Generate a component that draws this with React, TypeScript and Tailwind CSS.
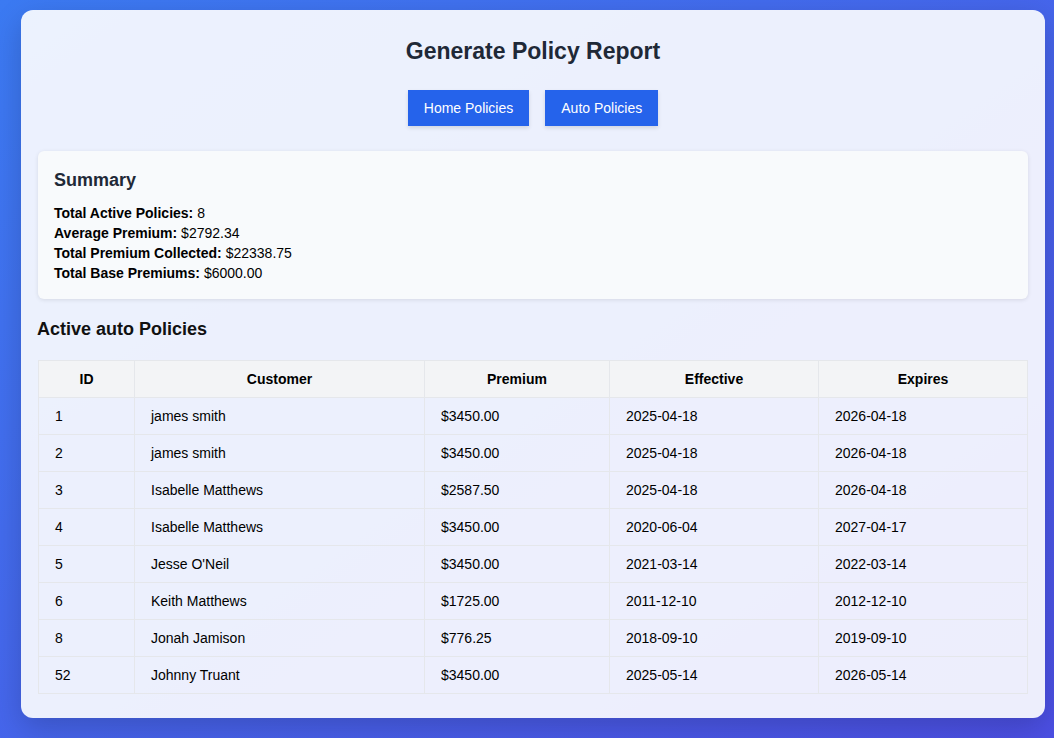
import React from "react";

const rows = [
  ["1", "james smith", "$3450.00", "2025-04-18", "2026-04-18"],
  ["2", "james smith", "$3450.00", "2025-04-18", "2026-04-18"],
  ["3", "Isabelle Matthews", "$2587.50", "2025-04-18", "2026-04-18"],
  ["4", "Isabelle Matthews", "$3450.00", "2020-06-04", "2027-04-17"],
  ["5", "Jesse O'Neil", "$3450.00", "2021-03-14", "2022-03-14"],
  ["6", "Keith Matthews", "$1725.00", "2011-12-10", "2012-12-10"],
  ["8", "Jonah Jamison", "$776.25", "2018-09-10", "2019-09-10"],
  ["52", "Johnny Truant", "$3450.00", "2025-05-14", "2026-05-14"],
];

export default function App() {
  return (
    <div
      className="min-h-[738px] w-full bg-gradient-to-br from-[#3b7af2] to-[#4c4fe4] pt-[10px] pl-[21px] pr-[9px] pb-[21px]"
      style={{ fontFamily: '"Liberation Sans", Arial, sans-serif' }}
    >
      <div className="w-[1024px] rounded-xl bg-white/90 px-4 pt-4 pb-6 shadow-[0_10px_30px_rgba(0,0,0,0.18)]">
        <h1 className="mt-[9px] text-center text-[23px] leading-8 font-bold text-[#1f2937]">
          Generate Policy Report
        </h1>
        <div className="mt-[23px] flex justify-center gap-4">
          <button className="h-9 bg-[#2563eb] px-4 text-[14px] text-white shadow-[0_2px_4px_rgba(0,0,0,0.12)]">
            Home Policies
          </button>
          <button className="h-9 bg-[#2563eb] px-4 text-[14px] text-white shadow-[0_2px_4px_rgba(0,0,0,0.12)]">
            Auto Policies
          </button>
        </div>
        <div className="mx-px mt-[25px] rounded-md bg-[#f8fafc] px-4 pt-[17px] pb-[16px] shadow-[0_1px_4px_rgba(0,0,0,0.1)]">
          <h2 className="text-[18px] leading-6 font-bold text-[#1f2937]">Summary</h2>
          <div className="mt-[11px] text-[14px] leading-5 text-black">
            <p><span className="font-bold">Total Active Policies:</span> 8</p>
            <p><span className="font-bold">Average Premium:</span> $2792.34</p>
            <p><span className="font-bold">Total Premium Collected:</span> $22338.75</p>
            <p><span className="font-bold">Total Base Premiums:</span> $6000.00</p>
          </div>
        </div>
        <h2 className="mt-[18px] text-[18px] leading-6 font-bold text-[#111]">Active auto Policies</h2>
        <div className="mx-px mt-[19px]">
          <table className="w-full border-collapse text-[14px] leading-5 text-black">
            <thead>
              <tr className="bg-[#f3f4f6]">
                <th className="w-[96px] border border-[#e5e7eb] py-2 font-bold">ID</th>
                <th className="w-[290px] border border-[#e5e7eb] py-2 font-bold">Customer</th>
                <th className="w-[185px] border border-[#e5e7eb] py-2 font-bold">Premium</th>
                <th className="w-[209px] border border-[#e5e7eb] py-2 font-bold">Effective</th>
                <th className="border border-[#e5e7eb] py-2 font-bold">Expires</th>
              </tr>
            </thead>
            <tbody>
              {rows.map((r, i) => (
                <tr key={i}>
                  {r.map((c, j) => (
                    <td key={j} className="border border-[#e5e7eb] px-4 py-2">
                      {c}
                    </td>
                  ))}
                </tr>
              ))}
            </tbody>
          </table>
        </div>
      </div>
    </div>
  );
}
